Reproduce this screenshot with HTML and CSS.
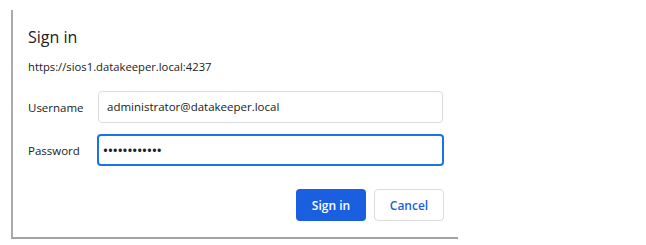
FILE: index.html
```html
<!DOCTYPE html>
<html>
<head>
<meta charset="utf-8">
<link rel="stylesheet" href="styles.css">
</head>
<body>
<div class="dialog">
  <h1 class="title">Sign in</h1>
  <div class="origin">https://sios1.datakeeper.local:4237</div>
  <div class="form">
    <label class="label">Username</label>
    <div class="field">administrator@datakeeper.local</div>
    <label class="label">Password</label>
    <div class="field focused"><span class="dots">••••••••••••</span></div>
  </div>
  <div class="actions">
    <button class="btn primary">Sign in</button>
    <button class="btn secondary">Cancel</button>
  </div>
</div>
</body>
</html>
```
FILE: styles.css
```css
html, body {
  margin: 0;
  background: #fff;
}
body {
  font-family: "Open Sans", "Noto Sans", sans-serif;
  color: #202124;
}
.dialog {
  margin: 10px 0 0 11px;
  width: 447px;
  height: 229px;
  box-sizing: border-box;
  border-left: 2px solid #ababab;
  border-bottom: 2px solid #a3a3a3;
  padding: 16px 13px 0 15px;
  display: flex;
  flex-direction: column;
}
.title {
  margin: 0;
  font-size: 16px;
  font-weight: 400;
  line-height: 22px;
}
.origin {
  margin-top: 11px;
  font-size: 11.25px;
  line-height: 16px;
}
.form {
  margin-top: 16px;
  display: grid;
  grid-template-columns: 69px 347px;
  row-gap: 11px;
  align-items: center;
}
.label {
  font-size: 11.5px;
}
.field {
  height: 32px;
  box-sizing: border-box;
  border: 1px solid #dadce0;
  border-radius: 4px;
  padding: 0 8px;
  font-size: 11.5px;
  line-height: 30px;
  margin-left: 1px;
  width: 345px;
}
.field.focused {
  border: 2px solid #1a73e8;
  margin-left: 0;
  width: 347px;
  padding-left: 4px;
  line-height: 28px;
}
.dots {
  font-size: 13px;
  font-weight: 600;
}
.actions {
  margin-top: 23px;
  display: flex;
  justify-content: flex-end;
  gap: 8px;
  padding-right: 1px;
}
.btn {
  height: 32px;
  box-sizing: border-box;
  border-radius: 4px;
  font-family: inherit;
  font-size: 12px;
  font-weight: 600;
  padding: 0;
}
.primary {
  width: 70px;
  background: #1a5fe0;
  border: none;
  color: #fff;
}
.secondary {
  width: 70px;
  background: #fff;
  border: 1px solid #dadce0;
  color: #1a5fe0;
}
```
